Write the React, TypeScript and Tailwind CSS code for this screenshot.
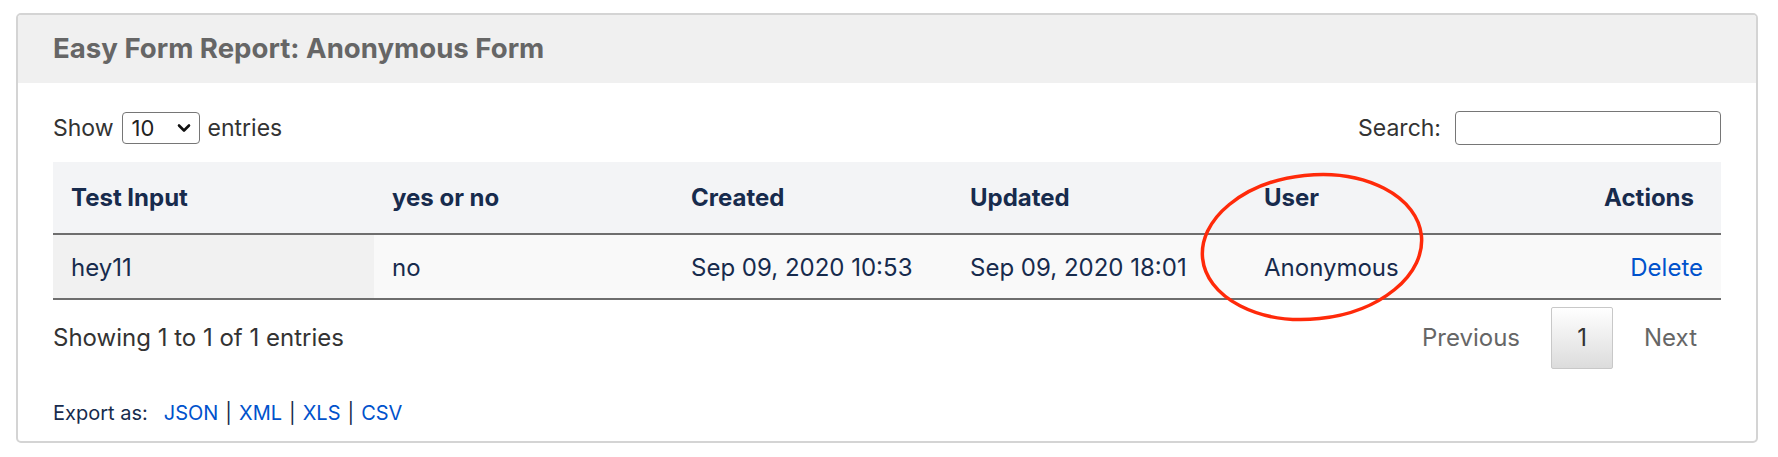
import React from "react";

export default function App() {
  return (
    <div className="relative w-[1778px] h-[457px] bg-white font-[Inter,'Noto_Sans',sans-serif]">
      <div className="pt-[13px] pl-[16px]">
        <div className="w-[1742px] h-[430px] border-2 border-[#d4d4d4] rounded-[5px] overflow-hidden bg-white">
          <div className="h-[68px] bg-[#f0f0f0] flex items-center pl-[35px]">
            <h1 className="text-[27.6px] font-bold text-[#666666] leading-none">Easy Form Report: Anonymous Form</h1>
          </div>
          <div className="px-[35px] pt-[28px]">
            <div className="flex items-center justify-between h-[34px] text-[23px] text-[#333333]">
              <div className="flex items-center gap-[8px]">
                <span>Show</span>
                <div className="w-[78px] h-[32px] border border-[#767676] rounded-[4px] flex items-center pl-[9px] pr-[6px] justify-between text-[#222] text-[22px]">
                  <span>10</span>
                  <svg width="14" height="10" viewBox="0 0 14 10" className="mr-[2px]">
                    <path d="M2 2.5 L7 7.5 L12 2.5" fill="none" stroke="#111" strokeWidth="2.6" strokeLinecap="round" strokeLinejoin="round" />
                  </svg>
                </div>
                <span>entries</span>
              </div>
              <div className="flex items-center gap-[14px]">
                <span>Search:</span>
                <div className="w-[266px] h-[34px] border border-[#767676] rounded-[4px] bg-white" />
              </div>
            </div>

            <table className="mt-[17px] w-full border-collapse text-[24px] text-[#172b4d]">
              <thead>
                <tr className="bg-[#f3f4f6] h-[72px] border-b-2 border-[#6e6e6e]">
                  <th className="w-[321px] text-left font-bold pl-[18px]">Test Input</th>
                  <th className="w-[299px] text-left font-bold pl-[18px]">yes or no</th>
                  <th className="w-[279px] text-left font-bold pl-[18px]">Created</th>
                  <th className="w-[294px] text-left font-bold pl-[18px]">Updated</th>
                  <th className="w-[260px] text-left font-bold pl-[18px]">User</th>
                  <th className="text-right font-bold pr-[27px]">Actions</th>
                </tr>
              </thead>
              <tbody>
                <tr className="bg-[#f9f9f9] h-[65px] border-b-2 border-[#6e6e6e]">
                  <td className="bg-[#f1f1f1] pl-[18px] pt-[3px]">hey11</td>
                  <td className="pl-[18px] pt-[3px]">no</td>
                  <td className="pl-[18px] pt-[3px]">Sep 09, 2020 10:53</td>
                  <td className="pl-[18px] pt-[3px]">Sep 09, 2020 18:01</td>
                  <td className="pl-[18px] pt-[3px]">Anonymous</td>
                  <td className="text-right pr-[18px] pt-[3px] text-[#0052cc]">Delete</td>
                </tr>
              </tbody>
            </table>

            <div className="mt-[7px] flex items-center justify-between text-[24px]">
              <span className="text-[#333333]">Showing 1 to 1 of 1 entries</span>
              <div className="flex items-center gap-[6px] text-[#666666]">
                <span className="h-[62px] px-[25px] flex items-center">Previous</span>
                <span className="h-[62px] w-[62px] flex items-center justify-center border border-[#c8c8c8] rounded-[2px] bg-gradient-to-b from-white to-[#dcdcdc] text-[#333]">1</span>
                <span className="h-[62px] pl-[25px] pr-[24px] flex items-center">Next</span>
              </div>
            </div>

            <div className="mt-[29px] text-[20px] text-[#172b4d] flex items-center">
              <span>Export as:</span>
              <span className="ml-[16px] text-[#0052cc]">JSON</span>
              <span className="mx-[7px]">|</span>
              <span className="text-[#0052cc]">XML</span>
              <span className="mx-[7px]">|</span>
              <span className="text-[#0052cc]">XLS</span>
              <span className="mx-[7px]">|</span>
              <span className="text-[#0052cc]">CSV</span>
            </div>
          </div>
        </div>
      </div>

      <svg className="absolute left-[1190px] top-[165px]" width="245" height="165" viewBox="0 0 245 165">
        <ellipse cx="122" cy="82" rx="110" ry="72" fill="none" stroke="#ff2a0a" strokeWidth="3.5" transform="rotate(-6 122 82)" />
      </svg>
    </div>
  );
}
